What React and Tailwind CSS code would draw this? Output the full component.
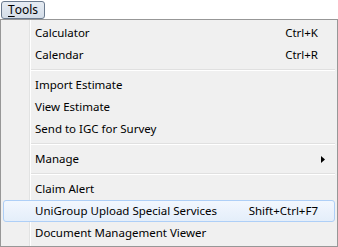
const font = { fontFamily: '"Noto Sans", "Open Sans", sans-serif' }

function Item({ label, shortcut, submenu, active }) {
  return (
    <div
      className={`h-[22px] flex items-center rounded-[3px] border ${
        active ? 'border-[#aecff7] bg-gradient-to-b from-[#f2f7fe] to-[#e4eefa]' : 'border-transparent'
      }`}
    >
      <div className="w-[31px] shrink-0" />
      <span className="flex-1 text-[11.5px] text-black leading-none">{label}</span>
      {shortcut && <span className="text-[11.5px] text-black leading-none pr-[16px]">{shortcut}</span>}
      {submenu && (
        <svg width="4" height="7" viewBox="0 0 4 7" className="mr-[9px]">
          <path d="M0 0L4 3.5L0 7Z" fill="#000" />
        </svg>
      )}
    </div>
  )
}

function Separator() {
  return (
    <div className="h-[8px] flex flex-col justify-center pl-[28px]">
      <div className="h-px bg-[#e0e0e0]" />
      <div className="h-px bg-white" />
    </div>
  )
}

export default function App() {
  return (
    <div className="w-[338px] h-[247px] bg-white flex flex-col" style={font}>
      <div className="h-[19px] flex items-start pl-px pt-px">
        <div className="h-[18px] px-[6px] flex items-center rounded-[3px] border border-[#6a7a8e] bg-gradient-to-b from-[#e6ecf3] to-[#d4dde8] text-[12px] text-black">
          <span className="underline underline-offset-2">T</span>ools
        </div>
      </div>
      <div className="relative flex-1 border border-[#979797] bg-[#f0f0f0] p-[2px] mb-px">
        <div className="absolute top-0 bottom-0 left-[28px] w-[2px] flex">
          <div className="w-px bg-[#e2e3e3]" />
          <div className="w-px bg-white" />
        </div>
        <div className="relative flex flex-col">
          <Item label="Calculator" shortcut="Ctrl+K" />
          <Item label="Calendar" shortcut="Ctrl+R" />
          <Separator />
          <Item label="Import Estimate" />
          <Item label="View Estimate" />
          <Item label="Send to IGC for Survey" />
          <Separator />
          <Item label="Manage" submenu />
          <Separator />
          <Item label="Claim Alert" />
          <Item label="UniGroup Upload Special Services" shortcut="Shift+Ctrl+F7" active />
          <Item label="Document Management Viewer" />
        </div>
      </div>
    </div>
  )
}
